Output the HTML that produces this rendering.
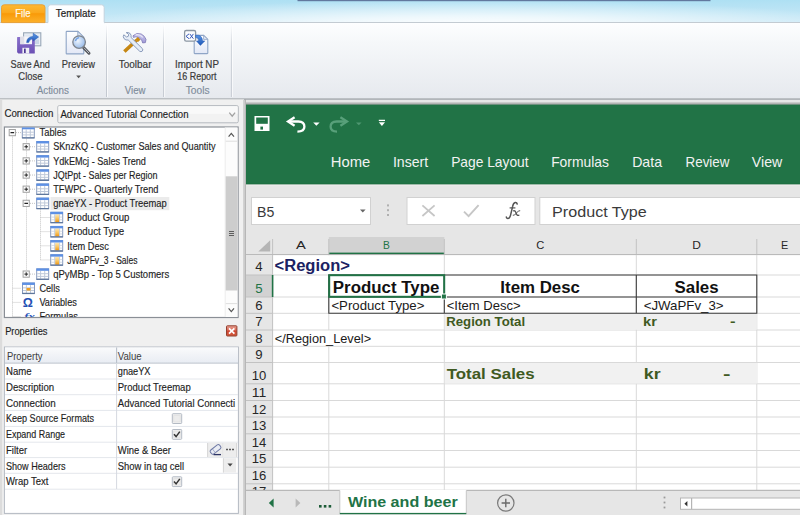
<!DOCTYPE html>
<html><head><meta charset="utf-8"><title>Template Editor</title>
<style>html,body{margin:0;padding:0;width:800px;height:515px;overflow:hidden;background:#f0f0f0;font-family:"Liberation Sans",sans-serif}svg{display:block}</style>
</head><body>
<svg width="800" height="515" viewBox="0 0 800 515">
<defs>
<linearGradient id="sky" x1="0" y1="0" x2="0" y2="1"><stop offset="0" stop-color="#aee0f3"/><stop offset="1" stop-color="#cdeaf7"/></linearGradient>
<radialGradient id="skyhi" cx="0.5" cy="0.5" r="0.5"><stop offset="0" stop-color="#fff" stop-opacity=".95"/><stop offset=".35" stop-color="#fff" stop-opacity=".7"/><stop offset="1" stop-color="#fff" stop-opacity="0"/></radialGradient>
<linearGradient id="rib" x1="0" y1="0" x2="0" y2="1"><stop offset="0" stop-color="#fdfeff"/><stop offset=".25" stop-color="#f6f8fa"/><stop offset="1" stop-color="#e6e9ee"/></linearGradient>
<linearGradient id="file" x1="0" y1="0" x2="0" y2="1"><stop offset="0" stop-color="#fdb933"/><stop offset=".45" stop-color="#fba81c"/><stop offset=".5" stop-color="#f99a08"/><stop offset="1" stop-color="#fcb12a"/></linearGradient>
<linearGradient id="hdr" x1="0" y1="0" x2="0" y2="1"><stop offset="0" stop-color="#fafbfc"/><stop offset=".5" stop-color="#f1f3f7"/><stop offset="1" stop-color="#e9edf3"/></linearGradient>
<linearGradient id="gsep" x1="0" y1="0" x2="0" y2="1"><stop offset="0" stop-color="#c9ced6" stop-opacity="0"/><stop offset=".3" stop-color="#c9ced6"/><stop offset="1" stop-color="#c3c8d0"/></linearGradient>
<linearGradient id="tblhd" x1="0" y1="0" x2="0" y2="1"><stop offset="0" stop-color="#6d9be0"/><stop offset="1" stop-color="#3f74cc"/></linearGradient>
<linearGradient id="orange" x1="0" y1="0" x2="0" y2="1"><stop offset="0" stop-color="#fde9b8"/><stop offset=".5" stop-color="#f9c766"/><stop offset="1" stop-color="#ee9410"/></linearGradient>
<g id="itable">
 <rect x="0.5" y="0.5" width="12" height="10.4" fill="#ffffff" stroke="#8699bc" stroke-width="1"/>
 <path d="M4.4 2.6 V10.6 M8.5 2.6 V10.6 M1 5.3 H12 M1 8 H12" stroke="#bfc9d9" stroke-width="1" fill="none"/>
 <rect x="0.2" y="0" width="12.6" height="2.4" fill="#5d90e4"/>
 <path d="M0.3 10.9 H12.7" stroke="#5f779c" stroke-width="1.3"/>
</g>
<g id="icol">
 <rect x="0.5" y="0.5" width="12" height="10.4" fill="#ffffff" stroke="#8699bc" stroke-width="1"/>
 <path d="M1 5.3 H12 M1 8 H12" stroke="#d5dce6" stroke-width="1" fill="none"/>
 <rect x="4.9" y="2.4" width="4.2" height="8.2" fill="url(#orange)"/>
 <path d="M4.5 2.6 V10.6 M9.4 2.6 V10.6" stroke="#c3cddd" stroke-width="1" fill="none"/>
 <rect x="0.2" y="0" width="12.6" height="2.4" fill="#5d90e4"/>
 <path d="M0.3 10.9 H12.7" stroke="#5f779c" stroke-width="1.3"/>
</g>
<g id="plus">
 <rect x="0.5" y="0.5" width="6.2" height="6.2" fill="#fdfdfd" stroke="#a2a2a2" stroke-width="1"/>
 <path d="M1.8 3.6 H5.4 M3.6 1.8 V5.4" stroke="#222" stroke-width="1"/>
</g>
<g id="minus">
 <rect x="0.5" y="0.5" width="6.2" height="6.2" fill="#fdfdfd" stroke="#a2a2a2" stroke-width="1"/>
 <path d="M1.8 3.6 H5.4" stroke="#222" stroke-width="1.1"/>
</g>
<g id="chk">
 <rect x="0.5" y="0.5" width="9.4" height="9.8" rx=".8" fill="#f3f3f3" stroke="#b3bac4" stroke-width="1"/>
 <rect x="2" y="2" width="6.4" height="6.8" fill="#ececec" stroke="#dcdcdc" stroke-width=".6"/>
</g>
</defs>

<rect x="0" y="0" width="800" height="515" fill="#f0f0f0" />
<rect x="0" y="0" width="800" height="23" fill="url(#sky)" />
<ellipse cx="470" cy="25" rx="400" ry="25" fill="url(#skyhi)"/>
<rect x="297.5" y="0" width="413" height="1.2" fill="#62789e" />
<rect x="0" y="22.5" width="800" height="76" fill="url(#rib)" />
<line x1="0" y1="22.5" x2="800" y2="22.5" stroke="#c3cbd2" stroke-width="1" />
<line x1="0" y1="99.1" x2="800" y2="99.1" stroke="#8e939a" stroke-width="1.4" />
<path d="M1.5 22.6 V7.5 Q1.5 4.8 4.2 4.8 H42.3 Q45 4.8 45 7.5 V22.6 Z" fill="url(#file)" stroke="#e9a035" stroke-width="1"/>
<text x="15.34" y="16.90" font-family="Liberation Sans" font-size="11" font-weight="normal" font-style="normal" fill="#fff9e8" textLength="15.19" lengthAdjust="spacingAndGlyphs"  stroke="#fff9e8" stroke-width="0.25">File</text>
<path d="M48 23.2 V7.5 Q48 4.8 50.7 4.8 H101.5 Q104.2 4.8 104.2 7.5 V23.2" fill="#fdfeff" stroke="#c3d3de" stroke-width="1"/>
<rect x="48.5" y="22" width="55.2" height="2" fill="#fdfeff" />
<text x="55.85" y="17.20" font-family="Liberation Sans" font-size="10.8" font-weight="normal" font-style="normal" fill="#222" textLength="39.87" lengthAdjust="spacingAndGlyphs"  stroke="#222" stroke-width="0.2">Template</text>
<rect x="106.0" y="25" width="1" height="72" fill="url(#gsep)" />
<rect x="107.0" y="25" width="1" height="72" fill="#ffffff" opacity=".7"/>
<rect x="163.1" y="25" width="1" height="72" fill="url(#gsep)" />
<rect x="164.1" y="25" width="1" height="72" fill="#ffffff" opacity=".7"/>
<rect x="230.9" y="25" width="1" height="72" fill="url(#gsep)" />
<rect x="231.9" y="25" width="1" height="72" fill="#ffffff" opacity=".7"/>
<text x="10.56" y="68.30" font-family="Liberation Sans" font-size="10.6" font-weight="normal" font-style="normal" fill="#3a3a3a" textLength="39.35" lengthAdjust="spacingAndGlyphs"  stroke="#3a3a3a" stroke-width="0.2">Save And</text>
<text x="18.36" y="80.00" font-family="Liberation Sans" font-size="10.6" font-weight="normal" font-style="normal" fill="#3a3a3a" textLength="24.15" lengthAdjust="spacingAndGlyphs"  stroke="#3a3a3a" stroke-width="0.2">Close</text>
<text x="61.86" y="68.30" font-family="Liberation Sans" font-size="10.6" font-weight="normal" font-style="normal" fill="#3a3a3a" textLength="33.15" lengthAdjust="spacingAndGlyphs"  stroke="#3a3a3a" stroke-width="0.2">Preview</text>
<path d="M76.2 75.4 H81 L78.6 78.2 Z" fill="#555"/>
<text x="118.76" y="68.40" font-family="Liberation Sans" font-size="10.6" font-weight="normal" font-style="normal" fill="#3a3a3a" textLength="32.75" lengthAdjust="spacingAndGlyphs"  stroke="#3a3a3a" stroke-width="0.2">Toolbar</text>
<text x="174.96" y="68.40" font-family="Liberation Sans" font-size="10.6" font-weight="normal" font-style="normal" fill="#3a3a3a" textLength="43.95" lengthAdjust="spacingAndGlyphs"  stroke="#3a3a3a" stroke-width="0.2">Import NP</text>
<text x="177.36" y="80.10" font-family="Liberation Sans" font-size="10.6" font-weight="normal" font-style="normal" fill="#3a3a3a" textLength="39.15" lengthAdjust="spacingAndGlyphs"  stroke="#3a3a3a" stroke-width="0.2">16 Report</text>
<text x="36.66" y="93.90" font-family="Liberation Sans" font-size="10.6" font-weight="normal" font-style="normal" fill="#7f8c9b" textLength="32.25" lengthAdjust="spacingAndGlyphs"  stroke="#7f8c9b" stroke-width="0.15">Actions</text>
<text x="124.76" y="93.90" font-family="Liberation Sans" font-size="10.6" font-weight="normal" font-style="normal" fill="#7f8c9b" textLength="20.75" lengthAdjust="spacingAndGlyphs"  stroke="#7f8c9b" stroke-width="0.15">View</text>
<text x="185.76" y="93.90" font-family="Liberation Sans" font-size="10.6" font-weight="normal" font-style="normal" fill="#7f8c9b" textLength="23.75" lengthAdjust="spacingAndGlyphs"  stroke="#7f8c9b" stroke-width="0.15">Tools</text>
<defs>
<linearGradient id="purp" x1="0" y1="0" x2="0" y2="1"><stop offset="0" stop-color="#8a72cc"/><stop offset="1" stop-color="#6b4fb4"/></linearGradient>
<linearGradient id="barrow" x1="0" y1="0" x2="0" y2="1"><stop offset="0" stop-color="#5b97e6"/><stop offset="1" stop-color="#1f57b6"/></linearGradient>
<linearGradient id="pagef" x1="0" y1="0" x2="0" y2="1"><stop offset="0" stop-color="#ffffff"/><stop offset="1" stop-color="#e3e8f6"/></linearGradient>
<radialGradient id="glass" cx=".4" cy=".4" r=".7"><stop offset="0" stop-color="#eef5fd"/><stop offset=".6" stop-color="#b3cdf0"/><stop offset="1" stop-color="#8fb4e6"/></radialGradient>
<linearGradient id="wood" x1="0" y1="0" x2="1" y2="1"><stop offset="0" stop-color="#e2a52a"/><stop offset="1" stop-color="#b97a08"/></linearGradient>
<linearGradient id="lav" x1="0" y1="0" x2="0" y2="1"><stop offset="0" stop-color="#d2cff0"/><stop offset="1" stop-color="#9d97d6"/></linearGradient>
</defs>
<g>
<rect x="23.6" y="32.8" width="17.2" height="13" fill="#e9eef5" stroke="#98a7b7" stroke-width="1.1"/>
<rect x="25.4" y="34.6" width="13.6" height="9.4" fill="#dfe8f3"/>
<rect x="32" y="39.5" width="7" height="4.5" fill="#c3d0e2" opacity=".8"/>
<path d="M17.1 37.4 Q17.1 36.9 17.6 36.9 H34.3 Q34.8 36.9 34.8 37.4 V53.1 Q34.8 53.6 34.3 53.6 H18.4 L17.1 52.3 Z" fill="url(#purp)"/>
<rect x="20.2" y="36.6" width="11.8" height="7.6" fill="#f4f4f8"/>
<rect x="20.2" y="36.6" width="4" height="7.6" fill="#d9d9e4" opacity=".8"/>
<rect x="22.4" y="47.8" width="6.8" height="5.8" fill="#eeeef4"/>
<rect x="24" y="48.6" width="1.7" height="4.4" fill="#4c3794"/>
<path d="M26.6 42.6 Q26.8 36.6 33.2 36.4 V33.2 L38.6 37 L33.2 41 V38.8 Q29.6 38.8 28.6 42.6 Z" fill="url(#barrow)" stroke="#1f56b0" stroke-width=".5" stroke-linejoin="round"/>
</g>
<g>
<path d="M66.2 32 Q66.2 31.4 66.8 31.4 H77.8 L83.8 37.2 V53.2 Q83.8 53.9 83.2 53.9 H66.8 Q66.2 53.9 66.2 53.2 Z" fill="url(#pagef)" stroke="#8fa5c6" stroke-width="1.1"/>
<path d="M77.8 31.4 V37.2 H83.8 Z" fill="#dfe7f4" stroke="#8fa5c6" stroke-width=".9" stroke-linejoin="round"/>
<path d="M83.6 47.6 L89 53.2" stroke="#55585e" stroke-width="3" stroke-linecap="round"/>
<path d="M84.2 48 L88.8 52.8" stroke="#c8cbd0" stroke-width=".9" stroke-linecap="round"/>
<circle cx="79.1" cy="42.1" r="6.3" fill="url(#glass)" stroke="#7f858d" stroke-width="1.3"/>
<path d="M75.4 41 Q76.2 38 79 37.6" fill="none" stroke="#5f93e0" stroke-width="1.3" opacity=".8"/>
</g>
<g>
<path d="M124.4 51.4 L136.6 40.2" stroke="url(#wood)" stroke-width="3.4" stroke-linecap="butt"/>
<path d="M124.4 51.4 L136.6 40.2" stroke="#b8780a" stroke-width="3.4" stroke-linecap="butt" opacity=".35"/>
<path d="M133 35.8 Q136.6 32.2 141.2 34 Q144.8 35.8 146 39.4 L145.4 42.6 L142.6 42.9 L142 40.8 Q140.6 38.2 137.8 37.2 Q135.2 36.4 133.4 37.4 Z" fill="url(#lav)" stroke="#7a75b4" stroke-width=".8" stroke-linejoin="round"/>
<path d="M136 34.8 Q139.6 34 142.4 37" fill="none" stroke="#e6e4f6" stroke-width="1.2" stroke-linecap="round"/>
<path d="M137.8 37 L140.4 39.8 L138 42 L135.4 39.2 Z" fill="#c98a12"/>
<path d="M124 38.6 Q122.6 36.6 123.8 34.8 L126.6 37 L128.4 36.2 L128.6 34.2 L126.2 32.6 Q128.6 32 130.2 33.6 Q131.6 35.2 131 37.4 L142.4 48.6 Q143.4 50 142.2 51.2 Q141 52.2 139.6 51.2 L128.2 40 Q125.8 40.6 124 38.6 Z" fill="#e6edf7" stroke="#8b9cbc" stroke-width="1" stroke-linejoin="round"/>
</g>
<g>
<path d="M194.2 36 Q194.2 35.4 194.8 35.4 H203.6 L207.8 39.4 V53 Q207.8 53.6 207.2 53.6 H194.8 Q194.2 53.6 194.2 53 Z" fill="url(#pagef)" stroke="#8fa5c6" stroke-width="1.1"/>
<path d="M203.6 35.4 V39.4 H207.8 Z" fill="#e4eaf5" stroke="#8fa5c6" stroke-width=".8" stroke-linejoin="round"/>
<rect x="184.6" y="30.5" width="11" height="10.6" rx="1.6" fill="#fbfcfe" stroke="#8b96a3" stroke-width="1.3"/>
<path d="M189 33.9 L186 36.3 L189 38.7" fill="none" stroke="#3a5cbc" stroke-width="1"/>
<path d="M189.8 33.9 L193.4 38.7 M193.4 33.9 L189.8 38.7" fill="none" stroke="#3a5cbc" stroke-width="1"/>
<path d="M195.6 35.2 Q202 34.4 202.6 40.9 H204.8 L200.4 45.4 L196.4 40.9 H198.6 Q198.6 37.6 195.6 37.4 Z" fill="url(#barrow)" stroke="#2259b4" stroke-width=".5" stroke-linejoin="round"/>
</g>
<rect x="0" y="99.3" width="244" height="416" fill="#f0f0f0" />
<rect x="0" y="99.3" width="2.2" height="416" fill="#dcdcdc" />
<text x="4.38" y="117.40" font-family="Liberation Sans" font-size="10.3" font-weight="normal" font-style="normal" fill="#1e1e1e" textLength="49.13" lengthAdjust="spacingAndGlyphs"  stroke="#1e1e1e" stroke-width="0.15">Connection</text>
<rect x="57.8" y="105.6" width="180.5" height="17.2" rx="1.5" fill="#f2f2f2" stroke="#b6babf" stroke-width="1"/>
<rect x="58.5" y="106.3" width="179" height="7.5" fill="#f9f9f9" />
<text x="60.38" y="117.60" font-family="Liberation Sans" font-size="10.3" font-weight="normal" font-style="normal" fill="#1e1e1e" textLength="128.13" lengthAdjust="spacingAndGlyphs"  stroke="#1e1e1e" stroke-width="0.15">Advanced Tutorial Connection</text>
<path d="M229.3 112.6 L232.2 116.2 L235.1 112.6" fill="none" stroke="#a2a2a2" stroke-width="1.3"/>
<rect x="4.4" y="127" width="233.7" height="190.5" fill="#fff" stroke="#8a8f96" stroke-width="1.2"/>
<clipPath id="treeclip"><rect x="5" y="127.5" width="220" height="189.5"/></clipPath>
<g clip-path="url(#treeclip)">
<rect x="50.5" y="197" width="118.8" height="13.2" fill="#ebebeb" />
<path d="M12.5 136.6 V324.55 M16 132.6 H21" fill="none" stroke="#c4c4c4" stroke-width="1" stroke-dasharray="1 1"/>
<path d="M26.5 138.6 V270.1 " fill="none" stroke="#c4c4c4" stroke-width="1" stroke-dasharray="1 1"/>
<path d="M30 146.75 H35" fill="none" stroke="#c4c4c4" stroke-width="1" stroke-dasharray="1 1"/>
<path d="M30 160.9 H35" fill="none" stroke="#c4c4c4" stroke-width="1" stroke-dasharray="1 1"/>
<path d="M30 175.05 H35" fill="none" stroke="#c4c4c4" stroke-width="1" stroke-dasharray="1 1"/>
<path d="M30 189.2 H35" fill="none" stroke="#c4c4c4" stroke-width="1" stroke-dasharray="1 1"/>
<path d="M30 203.35 H35" fill="none" stroke="#c4c4c4" stroke-width="1" stroke-dasharray="1 1"/>
<path d="M30 274.1 H35" fill="none" stroke="#c4c4c4" stroke-width="1" stroke-dasharray="1 1"/>
<path d="M40.5 209.35 V259.95 " fill="none" stroke="#c4c4c4" stroke-width="1" stroke-dasharray="1 1"/>
<path d="M40.5 217.5 H49.5" fill="none" stroke="#c4c4c4" stroke-width="1" stroke-dasharray="1 1"/>
<path d="M40.5 231.64999999999998 H49.5" fill="none" stroke="#c4c4c4" stroke-width="1" stroke-dasharray="1 1"/>
<path d="M40.5 245.8 H49.5" fill="none" stroke="#c4c4c4" stroke-width="1" stroke-dasharray="1 1"/>
<path d="M40.5 259.95 H49.5" fill="none" stroke="#c4c4c4" stroke-width="1" stroke-dasharray="1 1"/>
<path d="M12.5 288.25 H21" fill="none" stroke="#c4c4c4" stroke-width="1" stroke-dasharray="1 1"/>
<path d="M12.5 302.4 H21" fill="none" stroke="#c4c4c4" stroke-width="1" stroke-dasharray="1 1"/>
<path d="M12.5 316.55 H21" fill="none" stroke="#c4c4c4" stroke-width="1" stroke-dasharray="1 1"/>
<use href="#minus" x="8.7" y="129.00"/>
<use href="#plus" x="22.6" y="143.15"/>
<use href="#plus" x="22.6" y="157.30"/>
<use href="#plus" x="22.6" y="171.45"/>
<use href="#plus" x="22.6" y="185.60"/>
<use href="#plus" x="22.6" y="270.50"/>
<use href="#minus" x="22.6" y="199.75"/>
<use href="#itable" x="21.8" y="126.90"/>
<use href="#itable" x="36.2" y="141.05"/>
<use href="#itable" x="36.2" y="155.20"/>
<use href="#itable" x="36.2" y="169.35"/>
<use href="#itable" x="36.2" y="183.50"/>
<use href="#itable" x="36.2" y="197.65"/>
<use href="#itable" x="36.2" y="268.40"/>
<use href="#icol" x="50.2" y="211.80"/>
<use href="#icol" x="50.2" y="225.95"/>
<use href="#icol" x="50.2" y="240.10"/>
<use href="#icol" x="50.2" y="254.25"/>
<use href="#itable" x="22" y="282.55"/><rect x="26.6" y="287.95" width="3.9" height="2.6" fill="#f0a020"/>
<text x="22.84" y="307.30" font-family="Liberation Sans" font-size="12.6" font-weight="bold" font-style="normal" fill="#2450b4" textLength="10.13" lengthAdjust="spacingAndGlyphs" >Ω</text>
<text x="24.34" y="319.95" font-family="Liberation Serif" font-size="11" font-weight="bold" font-style="italic" fill="#2a55b8" textLength="10.49" lengthAdjust="spacingAndGlyphs" >fx</text>
<text x="39.58" y="136.30" font-family="Liberation Sans" font-size="10.3" font-weight="normal" font-style="normal" fill="#1e1e1e" textLength="26.93" lengthAdjust="spacingAndGlyphs"  stroke="#1e1e1e" stroke-width="0.15">Tables</text>
<text x="53.18" y="150.45" font-family="Liberation Sans" font-size="10.3" font-weight="normal" font-style="normal" fill="#1e1e1e" textLength="162.33" lengthAdjust="spacingAndGlyphs"  stroke="#1e1e1e" stroke-width="0.15">SKnzKQ - Customer Sales and Quantity</text>
<text x="53.18" y="164.60" font-family="Liberation Sans" font-size="10.3" font-weight="normal" font-style="normal" fill="#1e1e1e" textLength="92.73" lengthAdjust="spacingAndGlyphs"  stroke="#1e1e1e" stroke-width="0.15">YdkEMcj - Sales Trend</text>
<text x="53.18" y="178.75" font-family="Liberation Sans" font-size="10.3" font-weight="normal" font-style="normal" fill="#1e1e1e" textLength="104.33" lengthAdjust="spacingAndGlyphs"  stroke="#1e1e1e" stroke-width="0.15">JQtPpt - Sales per Region</text>
<text x="53.18" y="192.90" font-family="Liberation Sans" font-size="10.3" font-weight="normal" font-style="normal" fill="#1e1e1e" textLength="105.33" lengthAdjust="spacingAndGlyphs"  stroke="#1e1e1e" stroke-width="0.15">TFWPC - Quarterly Trend</text>
<text x="53.18" y="207.05" font-family="Liberation Sans" font-size="10.3" font-weight="normal" font-style="normal" fill="#1e1e1e" textLength="113.53" lengthAdjust="spacingAndGlyphs"  stroke="#1e1e1e" stroke-width="0.15">gnaeYX - Product Treemap</text>
<text x="66.98" y="221.20" font-family="Liberation Sans" font-size="10.3" font-weight="normal" font-style="normal" fill="#1e1e1e" textLength="62.33" lengthAdjust="spacingAndGlyphs"  stroke="#1e1e1e" stroke-width="0.15">Product Group</text>
<text x="67.28" y="235.35" font-family="Liberation Sans" font-size="10.3" font-weight="normal" font-style="normal" fill="#1e1e1e" textLength="56.93" lengthAdjust="spacingAndGlyphs"  stroke="#1e1e1e" stroke-width="0.15">Product Type</text>
<text x="67.28" y="249.50" font-family="Liberation Sans" font-size="10.3" font-weight="normal" font-style="normal" fill="#1e1e1e" textLength="41.53" lengthAdjust="spacingAndGlyphs"  stroke="#1e1e1e" stroke-width="0.15">Item Desc</text>
<text x="67.28" y="263.65" font-family="Liberation Sans" font-size="10.3" font-weight="normal" font-style="normal" fill="#1e1e1e" textLength="70.23" lengthAdjust="spacingAndGlyphs"  stroke="#1e1e1e" stroke-width="0.15">JWaPFv_3 - Sales</text>
<text x="53.18" y="277.80" font-family="Liberation Sans" font-size="10.3" font-weight="normal" font-style="normal" fill="#1e1e1e" textLength="116.13" lengthAdjust="spacingAndGlyphs"  stroke="#1e1e1e" stroke-width="0.15">qPyMBp - Top 5 Customers</text>
<text x="39.38" y="291.95" font-family="Liberation Sans" font-size="10.3" font-weight="normal" font-style="normal" fill="#1e1e1e" textLength="20.43" lengthAdjust="spacingAndGlyphs"  stroke="#1e1e1e" stroke-width="0.15">Cells</text>
<text x="39.38" y="306.10" font-family="Liberation Sans" font-size="10.3" font-weight="normal" font-style="normal" fill="#1e1e1e" textLength="37.43" lengthAdjust="spacingAndGlyphs"  stroke="#1e1e1e" stroke-width="0.15">Variables</text>
<text x="39.38" y="320.25" font-family="Liberation Sans" font-size="10.3" font-weight="normal" font-style="normal" fill="#1e1e1e" textLength="38.63" lengthAdjust="spacingAndGlyphs"  stroke="#1e1e1e" stroke-width="0.15">Formulas</text>
</g>
<rect x="225.2" y="127.5" width="12.3" height="189.5" fill="#fcfcfc" />
<line x1="225.2" y1="127.5" x2="225.2" y2="317" stroke="#ececec" stroke-width="1" />
<line x1="225.7" y1="141.2" x2="237.5" y2="141.2" stroke="#dedede" stroke-width="1" />
<line x1="225.7" y1="303.6" x2="237.5" y2="303.6" stroke="#dedede" stroke-width="1" />
<rect x="225.7" y="176.3" width="11.9" height="114.2" fill="#cdcdcd" />
<path d="M228.6 136.6 L231.3 133.4 L234 136.6" fill="none" stroke="#555" stroke-width="1.2"/>
<path d="M228.6 308.4 L231.3 311.6 L234 308.4" fill="none" stroke="#555" stroke-width="1.2"/>
<path d="M229 231.5 H234 M229 233.5 H234 M229 235.5 H234" stroke="#5e5e5e" stroke-width="1" fill="none"/>
<text x="5.18" y="334.80" font-family="Liberation Sans" font-size="10.3" font-weight="normal" font-style="normal" fill="#1e1e1e" textLength="42.33" lengthAdjust="spacingAndGlyphs"  stroke="#1e1e1e" stroke-width="0.15">Properties</text>
<linearGradient id="redb" x1="0" y1="0" x2="0" y2="1"><stop offset="0" stop-color="#eaa597"/><stop offset=".45" stop-color="#d8604e"/><stop offset=".5" stop-color="#cf4531"/><stop offset="1" stop-color="#d25a3c"/></linearGradient>
<rect x="226.5" y="325.8" width="10.4" height="10.2" rx=".8" fill="url(#redb)" stroke="#93402f" stroke-width="1"/>
<path d="M229 328.3 L234.4 333.6 M234.4 328.3 L229 333.6" stroke="#fff" stroke-width="1.7" fill="none"/>
<rect x="4.4" y="347" width="234" height="166.4" fill="#fff" stroke="#b4bac3" stroke-width="1"/>
<rect x="5" y="347.5" width="233" height="15.3" fill="url(#hdr)" />
<line x1="4.4" y1="363.1" x2="238.4" y2="363.1" stroke="#b9c0ca" stroke-width="1" />
<line x1="5" y1="379" x2="238" y2="379" stroke="#e4e7ec" stroke-width="1" />
<line x1="5" y1="394.7" x2="238" y2="394.7" stroke="#e4e7ec" stroke-width="1" />
<line x1="5" y1="410.4" x2="238" y2="410.4" stroke="#e4e7ec" stroke-width="1" />
<line x1="5" y1="426.4" x2="238" y2="426.4" stroke="#e4e7ec" stroke-width="1" />
<line x1="5" y1="442.2" x2="238" y2="442.2" stroke="#e4e7ec" stroke-width="1" />
<line x1="5" y1="457.6" x2="238" y2="457.6" stroke="#e4e7ec" stroke-width="1" />
<line x1="5" y1="473.3" x2="238" y2="473.3" stroke="#e4e7ec" stroke-width="1" />
<line x1="5" y1="489.2" x2="238" y2="489.2" stroke="#e4e7ec" stroke-width="1" />
<line x1="116.6" y1="347.5" x2="116.6" y2="489" stroke="#d5d9e0" stroke-width="1" />
<line x1="116.6" y1="347.5" x2="116.6" y2="363" stroke="#b9c0ca" stroke-width="1" />
<text x="6.98" y="359.60" font-family="Liberation Sans" font-size="10.3" font-weight="normal" font-style="normal" fill="#3c3c3c" textLength="35.53" lengthAdjust="spacingAndGlyphs" >Property</text>
<text x="117.78" y="359.60" font-family="Liberation Sans" font-size="10.3" font-weight="normal" font-style="normal" fill="#3c3c3c" textLength="23.93" lengthAdjust="spacingAndGlyphs" >Value</text>
<text x="5.98" y="375.20" font-family="Liberation Sans" font-size="10.3" font-weight="normal" font-style="normal" fill="#1e1e1e" textLength="25.53" lengthAdjust="spacingAndGlyphs"  stroke="#1e1e1e" stroke-width="0.15">Name</text>
<text x="5.98" y="390.92" font-family="Liberation Sans" font-size="10.3" font-weight="normal" font-style="normal" fill="#1e1e1e" textLength="48.13" lengthAdjust="spacingAndGlyphs"  stroke="#1e1e1e" stroke-width="0.15">Description</text>
<text x="5.98" y="406.64" font-family="Liberation Sans" font-size="10.3" font-weight="normal" font-style="normal" fill="#1e1e1e" textLength="49.63" lengthAdjust="spacingAndGlyphs"  stroke="#1e1e1e" stroke-width="0.15">Connection</text>
<text x="5.98" y="422.36" font-family="Liberation Sans" font-size="10.3" font-weight="normal" font-style="normal" fill="#1e1e1e" textLength="88.03" lengthAdjust="spacingAndGlyphs"  stroke="#1e1e1e" stroke-width="0.15">Keep Source Formats</text>
<text x="5.98" y="438.08" font-family="Liberation Sans" font-size="10.3" font-weight="normal" font-style="normal" fill="#1e1e1e" textLength="59.13" lengthAdjust="spacingAndGlyphs"  stroke="#1e1e1e" stroke-width="0.15">Expand Range</text>
<text x="5.98" y="453.80" font-family="Liberation Sans" font-size="10.3" font-weight="normal" font-style="normal" fill="#1e1e1e" textLength="21.13" lengthAdjust="spacingAndGlyphs"  stroke="#1e1e1e" stroke-width="0.15">Filter</text>
<text x="5.98" y="469.52" font-family="Liberation Sans" font-size="10.3" font-weight="normal" font-style="normal" fill="#1e1e1e" textLength="59.53" lengthAdjust="spacingAndGlyphs"  stroke="#1e1e1e" stroke-width="0.15">Show Headers</text>
<text x="5.98" y="485.24" font-family="Liberation Sans" font-size="10.3" font-weight="normal" font-style="normal" fill="#1e1e1e" textLength="42.53" lengthAdjust="spacingAndGlyphs"  stroke="#1e1e1e" stroke-width="0.15">Wrap Text</text>
<text x="117.78" y="375.30" font-family="Liberation Sans" font-size="10.3" font-weight="normal" font-style="normal" fill="#1e1e1e" textLength="32.73" lengthAdjust="spacingAndGlyphs"  stroke="#1e1e1e" stroke-width="0.15">gnaeYX</text>
<text x="117.78" y="391.00" font-family="Liberation Sans" font-size="10.3" font-weight="normal" font-style="normal" fill="#1e1e1e" textLength="72.93" lengthAdjust="spacingAndGlyphs"  stroke="#1e1e1e" stroke-width="0.15">Product Treemap</text>
<text x="117.78" y="406.70" font-family="Liberation Sans" font-size="10.3" font-weight="normal" font-style="normal" fill="#1e1e1e" textLength="117.33" lengthAdjust="spacingAndGlyphs"  stroke="#1e1e1e" stroke-width="0.15">Advanced Tutorial Connecti</text>
<text x="117.78" y="453.80" font-family="Liberation Sans" font-size="10.3" font-weight="normal" font-style="normal" fill="#1e1e1e" textLength="53.13" lengthAdjust="spacingAndGlyphs"  stroke="#1e1e1e" stroke-width="0.15">Wine &amp; Beer</text>
<text x="117.78" y="469.50" font-family="Liberation Sans" font-size="10.3" font-weight="normal" font-style="normal" fill="#1e1e1e" textLength="66.23" lengthAdjust="spacingAndGlyphs"  stroke="#1e1e1e" stroke-width="0.15">Show in tag cell</text>
<use href="#chk" x="171.8" y="413.2"/>
<use href="#chk" x="171.8" y="429"/>
<path d="M174 434.2 L176.1 436.6 L179.8 431.6" fill="none" stroke="#333" stroke-width="1.5"/>
<use href="#chk" x="171.8" y="476.3"/>
<path d="M174 481.5 L176.1 483.90000000000003 L179.8 478.90000000000003" fill="none" stroke="#333" stroke-width="1.5"/>
<rect x="207.7" y="442.5" width="14.3" height="14.6" fill="#ededed" />
<rect x="223.6" y="442.5" width="12.6" height="14.6" fill="#ededed" />
<g transform="rotate(-38 215.2 449.6)"><rect x="209.8" y="447.2" width="11.6" height="4.9" rx="1.7" fill="#e9ecf4" stroke="#6f7aa6" stroke-width="1"/><path d="M213.4 447.4 V452" stroke="#9aa3c4" stroke-width=".8"/></g>
<path d="M213.6 454.6 H221" stroke="#2e3566" stroke-width="1.3"/>
<path d="M226.2 449.6 h1.6 M229.2 449.6 h1.6 M232.2 449.6 h1.6" stroke="#333" stroke-width="1.5"/>
<line x1="207.6" y1="443" x2="207.6" y2="457" stroke="#d6d6d6" stroke-width="1" />
<line x1="222.9" y1="443" x2="222.9" y2="457" stroke="#d6d6d6" stroke-width="1" />
<line x1="236.6" y1="443" x2="236.6" y2="457" stroke="#d6d6d6" stroke-width="1" />
<rect x="223.6" y="458.2" width="12.6" height="14.4" fill="#ededed" />
<line x1="223.4" y1="458.2" x2="223.4" y2="472.6" stroke="#d4d4d4" stroke-width="1" />
<path d="M227.5 463.6 H232.7 L230.1 466.6 Z" fill="#444"/>
<rect x="243.1" y="99.8" width="1.4" height="416" fill="#cfcfcf" />
<rect x="244.5" y="99.8" width="1.5" height="416" fill="#b7b7b7" />
<rect x="246" y="99.8" width="554" height="5" fill="#e6e6e6" />
<line x1="246" y1="102.7" x2="800" y2="102.7" stroke="#c4c4c4" stroke-width="1" />
<line x1="246" y1="104.1" x2="800" y2="104.1" stroke="#747474" stroke-width="1" />
<rect x="246" y="104.6" width="554" height="80" fill="#217346" />
<line x1="246" y1="184.2" x2="800" y2="184.2" stroke="#1a6a3c" stroke-width="1" />
<rect x="246" y="184.6" width="554" height="70" fill="#e6e6e6" />
<line x1="246" y1="185.2" x2="800" y2="185.2" stroke="#efecec" stroke-width="1" />
<rect x="254.5" y="116" width="15" height="15" fill="#ffffff" />
<rect x="256.2" y="117.5" width="11.6" height="6.3" fill="#217346" />
<rect x="260.4" y="126.6" width="2.6" height="3" fill="#217346" />
<path d="M288.4 121.5 H298.4 Q304.4 121.6 304.4 126.8 Q304.4 131.6 297.4 131.6" fill="none" stroke="#ffffff" stroke-width="2.3"/>
<path d="M294.6 117.2 L288 121.5 L294.6 125.8" fill="none" stroke="#ffffff" stroke-width="2.3"/>
<path d="M313.2 122.4 H319.6 L316.4 125.8 Z" fill="#ffffff"/>
<path d="M346.6 121.5 H336.6 Q330.6 121.6 330.6 126.8 Q330.6 131.6 337 131.6" fill="none" stroke="#58a07a" stroke-width="2.3"/>
<path d="M340.4 117.2 L347 121.5 L340.4 125.8" fill="none" stroke="#58a07a" stroke-width="2.3"/>
<path d="M356 122.4 H361.6 L358.8 125.2 Z" fill="#4f9771"/>
<path d="M378.8 120.4 H385" stroke="#ffffff" stroke-width="1.3"/><path d="M378.8 122.2 H385 L381.9 126 Z" fill="#ffffff"/>
<text x="330.75" y="167.30" font-family="Liberation Sans" font-size="14.2" font-weight="normal" font-style="normal" fill="#f2f2f2" textLength="39.48" lengthAdjust="spacingAndGlyphs" >Home</text>
<text x="392.95" y="167.30" font-family="Liberation Sans" font-size="14.2" font-weight="normal" font-style="normal" fill="#f2f2f2" textLength="35.28" lengthAdjust="spacingAndGlyphs" >Insert</text>
<text x="451.15" y="167.30" font-family="Liberation Sans" font-size="14.2" font-weight="normal" font-style="normal" fill="#f2f2f2" textLength="77.48" lengthAdjust="spacingAndGlyphs" >Page Layout</text>
<text x="551.15" y="167.30" font-family="Liberation Sans" font-size="14.2" font-weight="normal" font-style="normal" fill="#f2f2f2" textLength="57.78" lengthAdjust="spacingAndGlyphs" >Formulas</text>
<text x="632.15" y="167.30" font-family="Liberation Sans" font-size="14.2" font-weight="normal" font-style="normal" fill="#f2f2f2" textLength="29.88" lengthAdjust="spacingAndGlyphs" >Data</text>
<text x="685.55" y="167.30" font-family="Liberation Sans" font-size="14.2" font-weight="normal" font-style="normal" fill="#f2f2f2" textLength="43.88" lengthAdjust="spacingAndGlyphs" >Review</text>
<text x="751.85" y="167.30" font-family="Liberation Sans" font-size="14.2" font-weight="normal" font-style="normal" fill="#f2f2f2" textLength="30.38" lengthAdjust="spacingAndGlyphs" >View</text>
<rect x="251.5" y="197.5" width="119" height="27" fill="#fff" stroke="#d1d1d1" stroke-width="1"/>
<text x="257.12" y="216.70" font-family="Liberation Sans" font-size="14.6" font-weight="normal" font-style="normal" fill="#3a3a3a" textLength="17.31" lengthAdjust="spacingAndGlyphs" >B5</text>
<path d="M360 209.6 H365.6 L362.8 212.4 Z" fill="#666"/>
<rect x="387" y="204.4" width="2" height="2" fill="#b0b0b0" />
<rect x="387" y="209.2" width="2" height="2" fill="#b0b0b0" />
<rect x="387" y="214" width="2" height="2" fill="#b0b0b0" />
<rect x="407" y="197.5" width="128" height="27" fill="#fff" stroke="#d1d1d1" stroke-width="1"/>
<path d="M422.4 205.4 L434.6 216 M434.6 205.4 L422.4 216" stroke="#c6c6c6" stroke-width="1.8" fill="none"/>
<path d="M464 211.6 L468.6 216.2 L478.6 205.2" stroke="#c6c6c6" stroke-width="1.9" fill="none"/>
<path d="M517.2 204 Q516.8 202.3 515.2 202.5 Q513.4 202.9 512.7 206.2 L510.5 215.4 Q509.7 218.5 507.8 218.5 Q506.3 218.3 506.3 217" fill="none" stroke="#555" stroke-width="1.5" stroke-linecap="round"/>
<path d="M509.6 207.9 H515.4" stroke="#555" stroke-width="1.2"/>
<path d="M513.6 210.8 Q515.2 210.2 516 212.9 Q516.8 215.9 518.8 215.3" fill="none" stroke="#555" stroke-width="1.4" stroke-linecap="round"/>
<path d="M519.8 210.6 Q518.4 210.2 516.5 213 Q514.6 215.8 513.2 215.4" fill="none" stroke="#555" stroke-width="1" stroke-linecap="round"/>
<rect x="539.8" y="197.5" width="262" height="27" fill="#fff" stroke="#d1d1d1" stroke-width="1"/>
<text x="552.12" y="216.70" font-family="Liberation Sans" font-size="14.6" font-weight="normal" font-style="normal" fill="#3a3a3a" textLength="94.71" lengthAdjust="spacingAndGlyphs" >Product Type</text>
<rect x="246" y="254.5" width="554" height="236" fill="#fff" />
<rect x="246" y="237" width="554" height="17.5" fill="#e6e6e6" />
<rect x="328.8" y="237" width="115.5" height="16.5" fill="#d2d2d2" />
<rect x="328.8" y="252.6" width="115.5" height="2" fill="#217346" />
<line x1="272.6" y1="239" x2="272.6" y2="254" stroke="#c2c2c2" stroke-width="1" />
<line x1="328.8" y1="239" x2="328.8" y2="254" stroke="#c2c2c2" stroke-width="1" />
<line x1="444.3" y1="239" x2="444.3" y2="254" stroke="#c2c2c2" stroke-width="1" />
<line x1="636.3" y1="239" x2="636.3" y2="254" stroke="#c2c2c2" stroke-width="1" />
<line x1="756.8" y1="239" x2="756.8" y2="254" stroke="#c2c2c2" stroke-width="1" />
<line x1="246" y1="254.6" x2="800" y2="254.6" stroke="#b4b4b4" stroke-width="1" />
<path d="M270.2 240.2 V251.5 H258.3 Z" fill="#b5b5b5"/>
<text x="296.10" y="248.80" font-family="Liberation Sans" font-size="11.6" font-weight="normal" font-style="normal" fill="#262626" textLength="9.84" lengthAdjust="spacingAndGlyphs" >A</text>
<text x="383.10" y="248.80" font-family="Liberation Sans" font-size="11.6" font-weight="normal" font-style="normal" fill="#217346" textLength="6.84" lengthAdjust="spacingAndGlyphs" >B</text>
<text x="536.30" y="248.80" font-family="Liberation Sans" font-size="11.6" font-weight="normal" font-style="normal" fill="#262626" textLength="8.04" lengthAdjust="spacingAndGlyphs" >C</text>
<text x="692.30" y="248.80" font-family="Liberation Sans" font-size="11.6" font-weight="normal" font-style="normal" fill="#262626" textLength="8.64" lengthAdjust="spacingAndGlyphs" >D</text>
<text x="781.10" y="248.80" font-family="Liberation Sans" font-size="11.6" font-weight="normal" font-style="normal" fill="#262626" textLength="7.24" lengthAdjust="spacingAndGlyphs" >E</text>
<rect x="246" y="255" width="26.6" height="235.5" fill="#e6e6e6" />
<rect x="246" y="275" width="26.6" height="22" fill="#d2d2d2" />
<line x1="246" y1="275" x2="272.6" y2="275" stroke="#c2c2c2" stroke-width="1" />
<line x1="272.6" y1="275" x2="800" y2="275" stroke="#d9d9d9" stroke-width="1" />
<line x1="246" y1="297" x2="272.6" y2="297" stroke="#c2c2c2" stroke-width="1" />
<line x1="272.6" y1="297" x2="800" y2="297" stroke="#d9d9d9" stroke-width="1" />
<line x1="246" y1="313.3" x2="272.6" y2="313.3" stroke="#c2c2c2" stroke-width="1" />
<line x1="272.6" y1="313.3" x2="800" y2="313.3" stroke="#d9d9d9" stroke-width="1" />
<line x1="246" y1="330" x2="272.6" y2="330" stroke="#c2c2c2" stroke-width="1" />
<line x1="272.6" y1="330" x2="800" y2="330" stroke="#d9d9d9" stroke-width="1" />
<line x1="246" y1="346.3" x2="272.6" y2="346.3" stroke="#c2c2c2" stroke-width="1" />
<line x1="272.6" y1="346.3" x2="800" y2="346.3" stroke="#d9d9d9" stroke-width="1" />
<line x1="246" y1="362.5" x2="272.6" y2="362.5" stroke="#c2c2c2" stroke-width="1" />
<line x1="272.6" y1="362.5" x2="800" y2="362.5" stroke="#d9d9d9" stroke-width="1" />
<line x1="246" y1="383.8" x2="272.6" y2="383.8" stroke="#c2c2c2" stroke-width="1" />
<line x1="272.6" y1="383.8" x2="800" y2="383.8" stroke="#d9d9d9" stroke-width="1" />
<line x1="246" y1="400.5" x2="272.6" y2="400.5" stroke="#c2c2c2" stroke-width="1" />
<line x1="272.6" y1="400.5" x2="800" y2="400.5" stroke="#d9d9d9" stroke-width="1" />
<line x1="246" y1="417" x2="272.6" y2="417" stroke="#c2c2c2" stroke-width="1" />
<line x1="272.6" y1="417" x2="800" y2="417" stroke="#d9d9d9" stroke-width="1" />
<line x1="246" y1="433.8" x2="272.6" y2="433.8" stroke="#c2c2c2" stroke-width="1" />
<line x1="272.6" y1="433.8" x2="800" y2="433.8" stroke="#d9d9d9" stroke-width="1" />
<line x1="246" y1="450.5" x2="272.6" y2="450.5" stroke="#c2c2c2" stroke-width="1" />
<line x1="272.6" y1="450.5" x2="800" y2="450.5" stroke="#d9d9d9" stroke-width="1" />
<line x1="246" y1="467.2" x2="272.6" y2="467.2" stroke="#c2c2c2" stroke-width="1" />
<line x1="272.6" y1="467.2" x2="800" y2="467.2" stroke="#d9d9d9" stroke-width="1" />
<line x1="246" y1="483.8" x2="272.6" y2="483.8" stroke="#c2c2c2" stroke-width="1" />
<line x1="272.6" y1="483.8" x2="800" y2="483.8" stroke="#d9d9d9" stroke-width="1" />
<line x1="272.6" y1="255" x2="272.6" y2="490.5" stroke="#c2c2c2" stroke-width="1" />
<rect x="271.8" y="275" width="1.6" height="22" fill="#217346" />
<line x1="328.8" y1="255" x2="328.8" y2="490.5" stroke="#d9d9d9" stroke-width="1" />
<line x1="444.3" y1="255" x2="444.3" y2="490.5" stroke="#d9d9d9" stroke-width="1" />
<line x1="636.3" y1="255" x2="636.3" y2="490.5" stroke="#d9d9d9" stroke-width="1" />
<line x1="756.8" y1="255" x2="756.8" y2="490.5" stroke="#d9d9d9" stroke-width="1" />
<rect x="328" y="255.49999999999997" width="1.8" height="19.2" fill="#fff" />
<rect x="328" y="330.6" width="1.8" height="15.2" fill="#fff" />
<rect x="444.8" y="313.8" width="312" height="16" fill="#efefef" />
<rect x="444.8" y="363" width="312.5" height="20.6" fill="#f1f1f1" />
<clipPath id="rowclip"><rect x="246" y="255" width="27" height="235"/></clipPath><g clip-path="url(#rowclip)">
<text x="255.23" y="271.30" font-family="Liberation Sans" font-size="12.8" font-weight="normal" font-style="normal" fill="#262626" textLength="7.35" lengthAdjust="spacingAndGlyphs" >4</text>
<text x="255.23" y="293.20" font-family="Liberation Sans" font-size="12.8" font-weight="normal" font-style="normal" fill="#217346" textLength="7.35" lengthAdjust="spacingAndGlyphs" >5</text>
<text x="255.23" y="309.60" font-family="Liberation Sans" font-size="12.8" font-weight="normal" font-style="normal" fill="#262626" textLength="7.35" lengthAdjust="spacingAndGlyphs" >6</text>
<text x="255.23" y="326.30" font-family="Liberation Sans" font-size="12.8" font-weight="normal" font-style="normal" fill="#262626" textLength="7.35" lengthAdjust="spacingAndGlyphs" >7</text>
<text x="255.23" y="342.60" font-family="Liberation Sans" font-size="12.8" font-weight="normal" font-style="normal" fill="#262626" textLength="7.35" lengthAdjust="spacingAndGlyphs" >8</text>
<text x="255.23" y="358.80" font-family="Liberation Sans" font-size="12.8" font-weight="normal" font-style="normal" fill="#262626" textLength="7.35" lengthAdjust="spacingAndGlyphs" >9</text>
<text x="251.83" y="379.50" font-family="Liberation Sans" font-size="12.8" font-weight="normal" font-style="normal" fill="#262626" textLength="14.55" lengthAdjust="spacingAndGlyphs" >10</text>
<text x="251.83" y="397.00" font-family="Liberation Sans" font-size="12.8" font-weight="normal" font-style="normal" fill="#262626" textLength="14.55" lengthAdjust="spacingAndGlyphs" >11</text>
<text x="251.83" y="413.80" font-family="Liberation Sans" font-size="12.8" font-weight="normal" font-style="normal" fill="#262626" textLength="14.55" lengthAdjust="spacingAndGlyphs" >12</text>
<text x="251.83" y="430.20" font-family="Liberation Sans" font-size="12.8" font-weight="normal" font-style="normal" fill="#262626" textLength="14.55" lengthAdjust="spacingAndGlyphs" >13</text>
<text x="251.83" y="446.60" font-family="Liberation Sans" font-size="12.8" font-weight="normal" font-style="normal" fill="#262626" textLength="14.55" lengthAdjust="spacingAndGlyphs" >14</text>
<text x="251.83" y="463.00" font-family="Liberation Sans" font-size="12.8" font-weight="normal" font-style="normal" fill="#262626" textLength="14.55" lengthAdjust="spacingAndGlyphs" >15</text>
<text x="251.83" y="479.80" font-family="Liberation Sans" font-size="12.8" font-weight="normal" font-style="normal" fill="#262626" textLength="14.55" lengthAdjust="spacingAndGlyphs" >16</text>
<text x="251.83" y="496.40" font-family="Liberation Sans" font-size="12.8" font-weight="normal" font-style="normal" fill="#262626" textLength="14.55" lengthAdjust="spacingAndGlyphs" >17</text>
</g>
<path d="M328.8 275 H756.8 V313.3 H328.8 Z M328.8 297 H756.8 M444.3 275 V313.3 M636.3 275 V313.3" fill="none" stroke="#3c3c3c" stroke-width="1.1"/>
<rect x="329.2" y="275.2" width="115" height="21.6" fill="none" stroke="#217346" stroke-width="2"/>
<rect x="441.4" y="294" width="5" height="5" fill="#217346" stroke="#fff" stroke-width="1"/>
<text x="274.56" y="271.30" font-family="Liberation Sans" font-size="15.6" font-weight="bold" font-style="normal" fill="#1b2263" textLength="75.40" lengthAdjust="spacingAndGlyphs" >&lt;Region&gt;</text>
<text x="332.86" y="292.50" font-family="Liberation Sans" font-size="15.6" font-weight="bold" font-style="normal" fill="#111" textLength="106.60" lengthAdjust="spacingAndGlyphs" >Product Type</text>
<text x="500.36" y="292.50" font-family="Liberation Sans" font-size="15.6" font-weight="bold" font-style="normal" fill="#111" textLength="79.60" lengthAdjust="spacingAndGlyphs" >Item Desc</text>
<text x="674.56" y="292.50" font-family="Liberation Sans" font-size="15.6" font-weight="bold" font-style="normal" fill="#111" textLength="44.10" lengthAdjust="spacingAndGlyphs" >Sales</text>
<text x="331.40" y="310.00" font-family="Liberation Sans" font-size="13.4" font-weight="normal" font-style="normal" fill="#1a1a1a" textLength="93.01" lengthAdjust="spacingAndGlyphs" >&lt;Product Type&gt;</text>
<text x="446.70" y="310.00" font-family="Liberation Sans" font-size="13.4" font-weight="normal" font-style="normal" fill="#1a1a1a" textLength="73.91" lengthAdjust="spacingAndGlyphs" >&lt;Item Desc&gt;</text>
<text x="643.70" y="310.00" font-family="Liberation Sans" font-size="13.4" font-weight="normal" font-style="normal" fill="#1a1a1a" textLength="79.91" lengthAdjust="spacingAndGlyphs" >&lt;JWaPFv_3&gt;</text>
<text x="446.22" y="326.30" font-family="Liberation Sans" font-size="13" font-weight="bold" font-style="normal" fill="#3f5a22" textLength="78.87" lengthAdjust="spacingAndGlyphs" >Region Total</text>
<text x="643.02" y="326.30" font-family="Liberation Sans" font-size="13" font-weight="bold" font-style="normal" fill="#3f5a22" textLength="13.87" lengthAdjust="spacingAndGlyphs" >kr</text>
<text x="730.02" y="326.30" font-family="Liberation Sans" font-size="13" font-weight="bold" font-style="normal" fill="#3f5a22" textLength="5.57" lengthAdjust="spacingAndGlyphs" >-</text>
<text x="274.70" y="342.50" font-family="Liberation Sans" font-size="13.4" font-weight="normal" font-style="normal" fill="#1a1a1a" textLength="96.41" lengthAdjust="spacingAndGlyphs" >&lt;/Region_Level&gt;</text>
<text x="446.71" y="379.00" font-family="Liberation Sans" font-size="14.8" font-weight="bold" font-style="normal" fill="#3f5a22" textLength="87.93" lengthAdjust="spacingAndGlyphs" >Total Sales</text>
<text x="643.81" y="379.00" font-family="Liberation Sans" font-size="14.8" font-weight="bold" font-style="normal" fill="#3f5a22" textLength="16.83" lengthAdjust="spacingAndGlyphs" >kr</text>
<text x="723.11" y="379.00" font-family="Liberation Sans" font-size="14.8" font-weight="bold" font-style="normal" fill="#3f5a22" textLength="7.53" lengthAdjust="spacingAndGlyphs" >-</text>
<rect x="246" y="490.5" width="554" height="24.5" fill="#e6e6e6" />
<line x1="246" y1="490.3" x2="800" y2="490.3" stroke="#ababab" stroke-width="1" />
<rect x="339.8" y="489.8" width="126.5" height="23.6" fill="#fff" />
<line x1="339.8" y1="490.5" x2="339.8" y2="513.5" stroke="#c6c6c6" stroke-width="1" />
<line x1="466.3" y1="490.5" x2="466.3" y2="513.5" stroke="#c6c6c6" stroke-width="1" />
<rect x="339.8" y="512.9" width="126.5" height="1.3" fill="#217346" />
<path d="M273.6 498.6 V507.6 L268.8 503.1 Z" fill="#217346"/>
<path d="M295.6 498.6 V507.6 L300.4 503.1 Z" fill="#b9b9b9"/>
<rect x="319" y="505" width="2.6" height="2.6" fill="#1d5c38" />
<rect x="323.8" y="505" width="2.6" height="2.6" fill="#1d5c38" />
<rect x="328.6" y="505" width="2.6" height="2.6" fill="#1d5c38" />
<text x="347.90" y="507.00" font-family="Liberation Sans" font-size="15" font-weight="bold" font-style="normal" fill="#217346" textLength="109.75" lengthAdjust="spacingAndGlyphs" >Wine and beer</text>
<circle cx="505.8" cy="503" r="8.2" fill="none" stroke="#7a7a7a" stroke-width="1.2"/><path d="M501.6 503 H510 M505.8 498.8 V507.2" stroke="#6a6a6a" stroke-width="1.4"/>
<rect x="663.6" y="496.6" width="1.8" height="1.8" fill="#9a9a9a" />
<rect x="663.6" y="501.6" width="1.8" height="1.8" fill="#9a9a9a" />
<rect x="663.6" y="506.6" width="1.8" height="1.8" fill="#9a9a9a" />
<rect x="680.5" y="498" width="121" height="11.3" fill="#fff" stroke="#b5b5b5" stroke-width="1"/>
<line x1="691.6" y1="498" x2="691.6" y2="509.3" stroke="#b5b5b5" stroke-width="1.2" />
<path d="M687.4 501 V506.4 L684.4 503.7 Z" fill="#333"/>
</svg>
</body></html>
